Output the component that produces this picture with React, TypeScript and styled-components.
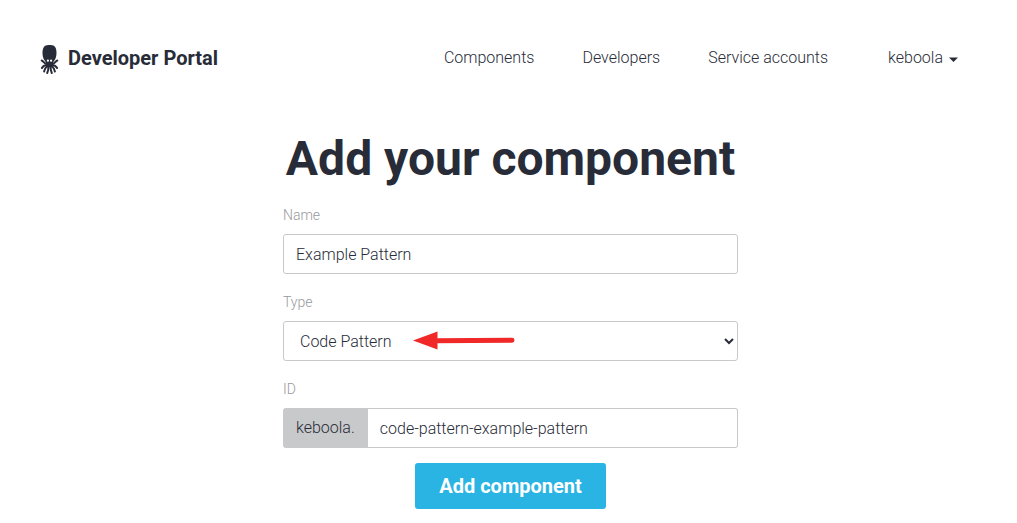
import React from 'react';
import styled, { createGlobalStyle } from 'styled-components';

const ink = '#282c38';
const line = '#c8c9cb';

const GlobalStyle = createGlobalStyle`
  *, *::before, *::after { box-sizing: border-box; }
  body {
    margin: 0;
    background: #fff;
    color: ${ink};
    font-family: Roboto, "Liberation Sans", sans-serif;
    font-size: 16px;
    font-weight: 300;
    line-height: 24px;
  }
  input, select, button { font: inherit; color: inherit; }
`;

const Header = styled.header`
  display: flex;
  align-items: center;
  justify-content: space-between;
  padding: 40px 59px 0 40px;
`;

const Brand = styled.a`
  display: flex;
  align-items: center;
  gap: 9px;
  height: 36px;
  color: inherit;
  font-size: 20px;
  font-weight: 700;
  text-decoration: none;
`;

const BrandIcon = styled.svg`
  width: 19px;
  height: 30px;
  margin-top: 4px;
`;

const Nav = styled.nav`
  display: flex;
  align-items: center;
  gap: 48px;
`;

const NavLink = styled.a`
  color: inherit;
  text-decoration: none;
`;

const AccountButton = styled.button`
  display: flex;
  align-items: center;
  gap: 6px;
  margin-left: 12px;
  padding: 0;
  border: 0;
  background: none;
`;

const Caret = styled.svg`
  width: 9px;
  height: 5px;
  margin-top: 3px;
`;

const Main = styled.main`
  display: flex;
  flex-direction: column;
  align-items: center;
  padding: 54px 16px 14px 20px;
`;

const Title = styled.h1`
  margin: 0 0 17px;
  font-size: 48px;
  font-weight: 700;
  line-height: 58px;
  text-align: center;
`;

const Form = styled.form`
  display: flex;
  flex-direction: column;
  gap: 18px;
  width: 100%;
  max-width: 455px;
`;

const Field = styled.div`
  display: flex;
  flex-direction: column;
  gap: 8px;
`;

const Label = styled.label`
  align-self: flex-start;
  color: #98999c;
  font-size: 14px;
  line-height: 21px;
`;

const TextInput = styled.input<{ $joined?: boolean }>`
  flex: 1;
  min-width: 0;
  height: 40px;
  padding: 0 12px;
  border: 1px solid ${line};
  border-left-width: ${(p) => (p.$joined ? 0 : 1)}px;
  border-radius: ${(p) => (p.$joined ? '0 3px 3px 0' : '3px')};
  background: #fff;
`;

const Control = styled.div`
  position: relative;
  display: flex;
`;

const Select = styled.select`
  flex: 1;
  height: 40px;
  padding: 0 0 0 12px;
  border: 1px solid ${line};
  border-radius: 3px;
  background: #fff;
`;

const Arrow = styled.svg`
  position: absolute;
  top: 9px;
  left: 130px;
  width: 103px;
  height: 21px;
  pointer-events: none;
`;

const Prefix = styled.span`
  display: flex;
  align-items: center;
  padding: 0 13px;
  border-radius: 3px 0 0 3px;
  background: ${line};
`;

const SubmitButton = styled.button`
  align-self: center;
  height: 46px;
  margin-top: -3px;
  padding: 0 24px;
  border: 0;
  border-radius: 3px;
  background: #29b4e3;
  color: #fff;
  font-size: 20px;
  font-weight: 700;
`;

const Octopus = () => (
  <BrandIcon viewBox="0 0 19 30" aria-hidden="true">
    <path
      fill={ink}
      d="M4.800 1C6 .2 7.800 0 9.500 0s3.500.2 4.700 1c1.700 1.300 2.300 4 2.300 6.800 0 2.900-.5 5-1.600 6.900-.6 1-1.400 1.700-1.700 2.700v3c0 1.200-.9 1.900-1.900 1.900H7.700c-1 0-1.900-.7-1.900-1.900v-3c-.3-1-1.100-1.700-1.700-2.700C3 12.800 2.500 10.700 2.500 7.800 2.500 5 3.100 2.300 4.800 1z"
    />
    <g fill="none" stroke={ink} strokeWidth="2" strokeLinecap="round">
      <path d="M7 19C4.200 19 3.800 16.200 1.700 15.500" />
      <path d="M12 19c2.800 0 3.200-2.800 5.300-3.500" />
      <path d="M7.500 20.200C4.500 20 3 20.800 1.900 23" />
      <path d="M11.500 20.200c3-.2 4.500.6 5.600 2.800" />
      <path d="M7.500 21C5.500 22.500 4.500 24 4.100 26.500" />
      <path d="M11.500 21c2 1.500 3 3 3.400 5.500" />
      <path d="M8.500 21.500c0 2.500-.4 4.500-1.300 6.500" />
      <path d="M10.500 21.500c0 2.500.4 4.500 1.300 6.500" />
    </g>
    <circle cx="7.900" cy="15.700" r="1.100" fill="#fff" />
    <circle cx="11.100" cy="15.700" r="1.100" fill="#fff" />
  </BrandIcon>
);

export default function App() {
  return (
    <>
      <GlobalStyle />
      <Header>
        <Brand href="#">
          <Octopus />
          Developer Portal
        </Brand>
        <Nav>
          <NavLink href="#components">Components</NavLink>
          <NavLink href="#developers">Developers</NavLink>
          <NavLink href="#accounts">Service accounts</NavLink>
          <AccountButton type="button">
            keboola
            <Caret viewBox="0 0 9 5" aria-hidden="true">
              <path d="M0 0.500h9L4.500 5z" fill={ink} />
            </Caret>
          </AccountButton>
        </Nav>
      </Header>
      <Main>
        <Title>Add your component</Title>
        <Form onSubmit={(e) => e.preventDefault()}>
          <Field>
            <Label htmlFor="name">Name</Label>
            <Control>
              <TextInput id="name" type="text" defaultValue="Example Pattern" />
            </Control>
          </Field>
          <Field>
            <Label htmlFor="type">Type</Label>
            <Control>
              <Select id="type" defaultValue="code-pattern">
                <option value="code-pattern">Code Pattern</option>
              </Select>
              <Arrow viewBox="0 0 103 21" aria-hidden="true">
                <path d="M22 10.700L99 10.300" stroke="#f02828" strokeWidth="5" strokeLinecap="round" />
                <path d="M0 10.500L24.500 1.500v18z" fill="#f02828" />
              </Arrow>
            </Control>
          </Field>
          <Field>
            <Label htmlFor="id">ID</Label>
            <Control>
              <Prefix>keboola.</Prefix>
              <TextInput id="id" type="text" $joined defaultValue="code-pattern-example-pattern" />
            </Control>
          </Field>
          <SubmitButton type="submit">Add component</SubmitButton>
        </Form>
      </Main>
    </>
  );
}
